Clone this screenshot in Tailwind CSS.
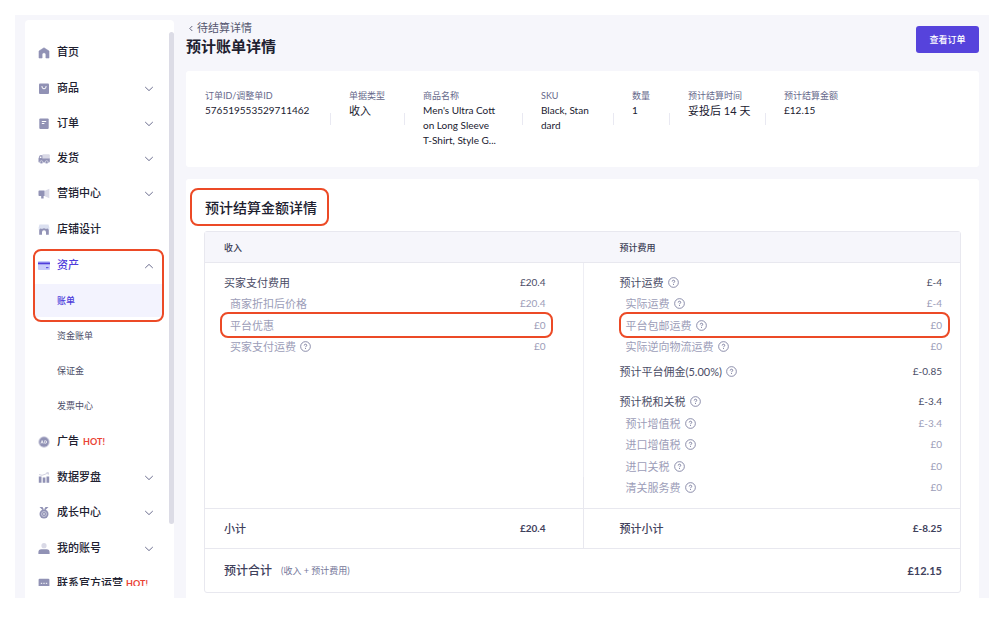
<!DOCTYPE html>
<html lang="zh-CN">
<head>
<meta charset="utf-8">
<meta name="viewport" content="width=device-width, initial-scale=1">
<title>预计账单详情</title>
<script src="https://cdn.jsdelivr.net/npm/@tailwindcss/browser@4"></script>
</head>
<body class="bg-white font-['Lato','Noto_Sans_CJK_SC',sans-serif] text-[#20202f]">
<svg class="hidden">
  <symbol id="down" viewBox="0 0 10 6"><path d="M1.200 1 5 4.600 8.800 1" fill="none" stroke="currentColor" stroke-width="1"/></symbol>
  <symbol id="help" viewBox="0 0 12 12"><circle cx="6" cy="6" r="5.3" fill="none" stroke="currentColor" stroke-width=".9"/><path d="M4.6 4.9c0-.9.6-1.4 1.4-1.4s1.4.5 1.4 1.2c0 1-1.4 1-1.4 2.1M6 7.7v1" fill="none" stroke="currentColor" stroke-width="1"/></symbol>
</svg>
<div class="h-screen pt-[15px] pr-4 pb-[27px] pl-[15px]">
<div class="flex h-full gap-3 overflow-hidden bg-[#f6f6fb] pr-[10px] pl-[10px]">

  <aside class="relative mt-[5px] w-[149px] shrink-0 rounded-t-sm bg-white pb-3">
    <div class="absolute top-3 right-0 h-[492px] w-[5px] rounded-full bg-[#dcdce6]"></div>
    <nav class="h-full overflow-hidden pt-[15px] pr-5 pl-[13px] text-[11px] font-medium">
      <a href="#" class="flex h-[35px] items-center gap-[7px]">
        <svg class="size-3" viewBox="0 0 12 12"><path d="M6 .8 11 4v7H7.9V7.600a1.900 1.900 0 0 0-3.800 0V11H1V4z" fill="#9192b5" stroke="#9192b5" stroke-width=".6" stroke-linejoin="round"/></svg>首页</a>
      <button class="mt-px flex h-[35px] w-full items-center gap-[7px]">
        <svg class="size-3" viewBox="0 0 12 12"><rect x="1" y=".5" width="10" height="10.400" rx="1" fill="#9192b5"/><path d="M4 3v.8a2 2 0 0 0 4 0V3" fill="none" stroke="#fff"/></svg>商品
        <svg class="ml-auto h-[6px] w-[10px] text-[#6d6f90]"><use href="#down"/></svg></button>
      <button class="flex h-[35px] w-full items-center gap-[7px]">
        <svg class="size-3" viewBox="0 0 12 12"><rect x="1.300" y=".5" width="9.400" height="10.400" rx="1" fill="#9192b5"/><path d="M3.800 3.500h4.400M3.800 5.500h2.600" stroke="#fff"/></svg>订单
        <svg class="ml-auto h-[6px] w-[10px] text-[#6d6f90]"><use href="#down"/></svg></button>
      <button class="flex h-[35px] w-full items-center gap-[7px]">
        <svg class="size-3" viewBox="0 0 12 12"><path d="M4.500 1.300h6.300a1 1 0 0 1 1 1V6H4.500z" fill="#d9d9e6"/><path d="M.5 5.500 1.400 3Q1.600 2.300 2.300 2.300h2.200v3.200h7.300v3a1 1 0 0 1-1 1H1.300a.8.800 0 0 1-.8-.8z" fill="#9192b5"/><path d="M1.700 5 2.200 3.600h1.200V5z" fill="#fff"/><circle cx="3.400" cy="9.200" r="1.500" fill="#9192b5" stroke="#fff" stroke-width=".5"/><circle cx="8.700" cy="9.200" r="1.500" fill="#9192b5" stroke="#fff" stroke-width=".5"/></svg>发货
        <svg class="ml-auto h-[6px] w-[10px] text-[#6d6f90]"><use href="#down"/></svg></button>
      <button class="flex h-[35px] w-full items-center gap-[7px]">
        <svg class="size-3" viewBox="0 0 12 12"><path d="M6.300 3 11.300.8v9.400L6.300 8z" fill="#dadae7"/><path d="M1.300 2.500h5.200v5.600H5.600v2.300H3.200V8.100H1.300a.8.8 0 0 1-.8-.8v-4a.8.8 0 0 1 .8-.8z" fill="#9192b5"/></svg>营销中心
        <svg class="ml-auto h-[6px] w-[10px] text-[#6d6f90]"><use href="#down"/></svg></button>
      <a href="#" class="mt-px flex h-[35px] items-center gap-[7px]">
        <svg class="size-3" viewBox="0 0 12 12"><path d="M1.500.5h9l.8 3v2.500H.7V3.500z" fill="#dbe0f0"/><path d="M1.200 6Q2.500 3.600 4 5.100 6 3.600 8 5.100q1.500-1.500 2.800.9v4.800H8V8.300a2 2 0 0 0-4 0v2.500H1.200z" fill="#9192b5"/></svg>店铺设计</a>

      <!-- 资产：展开的菜单组 -->
      <div class="relative mt-px pb-px">
        <button class="flex h-[35px] w-full items-center gap-[7px] text-[#4f3ddb]">
          <svg class="size-3" viewBox="0 0 12 12"><rect width="12" height="9" y="1" rx="1" fill="#c9cdfb"/><path d="M0 3.400h12" stroke="#4f3ddb" stroke-width="1.800"/><path d="M8 7.700h2.500" stroke="#4f3ddb"/></svg>资产
          <svg class="ml-auto h-[6px] w-[10px] rotate-180 text-[#6d6f90]"><use href="#down"/></svg></button>
        <a href="#" class="mt-px -mr-2 -ml-[3px] flex h-[33px] items-center bg-[#f3f3fe] pl-[22px] text-[9px] text-[#4f3ddb]">账单</a>
        <span class="pointer-events-none absolute top-px -right-[10px] -left-[5px] h-[73px] rounded-lg border-2 border-[#ec4a26]"></span>
      </div>
      <a href="#" class="flex h-[35px] items-center pl-[19px] text-[9px] font-normal text-[#4c4e68]">资金账单</a>
      <a href="#" class="flex h-[35px] items-center pl-[19px] text-[9px] font-normal text-[#4c4e68]">保证金</a>
      <a href="#" class="flex h-[35px] items-center pl-[19px] text-[9px] font-normal text-[#4c4e68]">发票中心</a>

      <a href="#" class="mt-px flex h-[35px] items-center gap-[7px]">
        <svg class="size-3" viewBox="0 0 12 12"><circle cx="6" cy="6" r="5.700" fill="#c9c9db"/><circle cx="6" cy="6" r="4.700" fill="#9192b5"/><path d="M2.900 7.500 4.100 4.500 5.300 7.500M3.300 6.700h1.600M6.700 4.700v2.600h.6q1.400 0 1.400-1.300T7.300 4.700z" fill="none" stroke="#fff" stroke-width=".7"/></svg>广告
        <span class="-ml-[3px] text-[9px] font-bold text-[#ea4335]">HOT!</span></a>
      <button class="mt-px flex h-[35px] w-full items-center gap-[7px]">
        <svg class="size-3" viewBox="0 0 12 12"><path d="M.8 4.500h2.700v6.300H.8zM4.700 5.500h2.700v5.300H4.700zM8.500 4.500h2.700v6.300H8.500z" fill="#9192b5"/><path d="M1 2.500 4 3.300 7 2.300 10.300.9M8.500.6l2 .2-.3 2" fill="none" stroke="#ccccdc" stroke-width=".9"/></svg>数据罗盘
        <svg class="ml-auto h-[6px] w-[10px] text-[#6d6f90]"><use href="#down"/></svg></button>
      <button class="flex h-[35px] w-full items-center gap-[7px]">
        <svg class="size-3" viewBox="0 0 12 12"><path d="M1.500 0h3L5.800 2.200 4.800 3.200zM10.500 0h-3L6.200 2.200l1 1z" fill="#9192b5"/><circle cx="6" cy="7" r="4.500" fill="#9192b5"/><circle cx="6" cy="7" r="2.500" fill="none" stroke="#d9d9e6" stroke-width=".7"/><circle cx="6" cy="7" r=".8" fill="#fff"/></svg>成长中心
        <svg class="ml-auto h-[6px] w-[10px] text-[#6d6f90]"><use href="#down"/></svg></button>
      <button class="mt-px flex h-[35px] w-full items-center gap-[7px]">
        <svg class="size-3" viewBox="0 0 12 12"><circle cx="6" cy="2.700" r="2.600" fill="#d9d9e6"/><path d="M.4 11V9.300a3 3 0 0 1 3-3h5.200a3 3 0 0 1 3 3V11z" fill="#9192b5"/></svg>我的账号
        <svg class="ml-auto h-[6px] w-[10px] text-[#6d6f90]"><use href="#down"/></svg></button>
      <a href="#" class="flex h-[35px] items-center gap-[7px] whitespace-nowrap">
        <svg class="size-3 shrink-0" viewBox="0 0 12 12"><rect x=".6" y=".8" width="10.800" height="9" rx="1" fill="#9192b5"/><path d="M2.800 5.300h1.400M5.300 5.300h1.400M7.800 5.300h1.400" stroke="#fff"/></svg>联系官方运营
        <span class="-ml-[4px] text-[9px] font-bold text-[#ea4335]">HOT!</span></a>
    </nav>
  </aside>

  <main class="flex min-w-0 flex-1 flex-col">
    <header class="flex h-14 shrink-0 items-start justify-between">
      <div class="pt-[5px]">
        <a href="#" class="flex h-4 items-center gap-1 pl-[3px] text-[11px] text-[#55576f]">
          <svg class="h-[7px] w-1" viewBox="0 0 4 7"><path d="M3.300 1 .8 3.500 3.300 6" fill="none" stroke="currentColor" stroke-width=".9"/></svg>待结算详情</a>
        <h1 class="text-[15px] leading-5 font-bold">预计账单详情</h1>
      </div>
      <button class="mt-[11px] h-[27px] w-[63px] rounded-[3px] bg-[#5643dc] text-[9px] font-medium text-white">查看订单</button>
    </header>

    <section class="flex min-h-24 shrink-0 gap-[18px] rounded-[3px] bg-white px-[19px] py-[17px] text-[11px] leading-[15px]">
      <dl class="w-[107px]"><dt class="text-[9px] whitespace-nowrap text-[#66688a]">订单ID/调整单ID</dt><dd class="text-[10px]">576519553529711462</dd></dl>
      <div class="h-3 w-px self-center bg-[#e9e9f2]"></div>
      <dl class="w-[37px]"><dt class="text-[9px] text-[#66688a]">单据类型</dt><dd>收入</dd></dl>
      <div class="h-3 w-px self-center bg-[#e9e9f2]"></div>
      <dl class="w-[81px]"><dt class="text-[9px] text-[#66688a]">商品名称</dt><dd class="text-[10px] whitespace-nowrap">Men's Ultra Cott<br>on Long Sleeve<br>T-Shirt, Style G...</dd></dl>
      <div class="h-3 w-px self-center bg-[#e9e9f2]"></div>
      <dl class="w-[54px]"><dt class="text-[9px] text-[#66688a]">SKU</dt><dd class="text-[10px] whitespace-nowrap">Black, Stan<br>dard</dd></dl>
      <div class="h-3 w-px self-center bg-[#e9e9f2]"></div>
      <dl class="w-[19px]"><dt class="text-[9px] text-[#66688a]">数量</dt><dd class="text-[10px]">1</dd></dl>
      <div class="h-3 w-px self-center bg-[#e9e9f2]"></div>
      <dl class="w-[59px]"><dt class="text-[9px] text-[#66688a]">预计结算时间</dt><dd class="whitespace-nowrap">妥投后 14 天</dd></dl>
      <div class="h-3 w-px self-center bg-[#e9e9f2]"></div>
      <dl><dt class="text-[9px] text-[#66688a]">预计结算金额</dt><dd class="text-[10px]">£12.15</dd></dl>
    </section>

    <section class="mt-3 flex-1 rounded-t-[3px] bg-white px-[18px] pt-[9px]">
      <div class="relative flex h-[38px] items-center">
        <h2 class="pl-px text-[14px] font-medium">预计结算金额详情</h2>
        <span class="pointer-events-none absolute inset-y-0 -left-[14px] w-[139px] rounded-lg border-2 border-[#ec4a26]"></span>
      </div>

      <table class="mt-[5px] w-full table-fixed border-separate border-spacing-0 rounded-[3px] border border-[#e8e8ef] text-[11px] leading-[15px] text-[#9c9db8]">
        <thead>
          <tr class="h-[31px] bg-[#f6f6fb] text-left text-[9px] text-[#3c3e56]">
            <th colspan="2" scope="colgroup" class="border-b border-[#e8e8ef] pl-[19px] font-medium">收入</th>
            <th colspan="2" scope="colgroup" class="border-b border-[#e8e8ef] pl-[37px] font-medium">预计费用</th>
          </tr>
        </thead>
        <tbody>
          <tr class="h-[30px] text-[#4a4c66]">
            <td class="pt-[9px] pl-[19px]">买家支付费用</td><td class="pt-[9px] pr-[37px] text-right text-[10px]">£20.4</td>
            <td class="border-l border-[#eeeef4] pt-[9px] pl-9"><span class="flex items-center gap-1">预计运费<button aria-label="说明" class="size-[11px] text-[#75779a]"><svg class="size-full"><use href="#help"/></svg></button></span></td><td class="pt-[9px] pr-[18px] text-right text-[10px]">£-4</td>
          </tr>
          <tr class="h-[21px]">
            <td class="pl-[25px]">商家折扣后价格</td><td class="pr-[37px] text-right text-[10px]">£20.4</td>
            <td class="border-l border-[#eeeef4] pl-[42px]"><span class="flex items-center gap-1">实际运费<button aria-label="说明" class="size-[11px] text-[#75779a]"><svg class="size-full"><use href="#help"/></svg></button></span></td><td class="pr-[18px] text-right text-[10px]">£-4</td>
          </tr>
          <tr class="h-[22px]">
            <td class="relative pl-[25px]">平台优惠<span class="pointer-events-none absolute -top-[2px] left-[15px] h-[26px] w-[calc(200%-45px)] rounded-lg border-2 border-[#ec4a26]"></span></td><td class="pr-[37px] text-right text-[10px]">£0</td>
            <td class="relative border-l border-[#eeeef4] pl-[42px]"><span class="flex items-center gap-1">平台包邮运费<button aria-label="说明" class="size-[11px] text-[#75779a]"><svg class="size-full"><use href="#help"/></svg></button></span><span class="pointer-events-none absolute -top-[2px] left-[35px] h-[26px] w-[calc(200%-44px)] rounded-lg border-2 border-[#ec4a26]"></span></td><td class="pr-[18px] text-right text-[10px]">£0</td>
          </tr>
          <tr class="h-[21px]">
            <td class="pl-[25px]"><span class="flex items-center gap-1">买家支付运费<button aria-label="说明" class="size-[11px] text-[#75779a]"><svg class="size-full"><use href="#help"/></svg></button></span></td><td class="pr-[37px] text-right text-[10px]">£0</td>
            <td class="border-l border-[#eeeef4] pl-[42px]"><span class="flex items-center gap-1">实际逆向物流运费<button aria-label="说明" class="size-[11px] text-[#75779a]"><svg class="size-full"><use href="#help"/></svg></button></span></td><td class="pr-[18px] text-right text-[10px]">£0</td>
          </tr>
          <tr class="h-[25px] text-[#4a4c66]">
            <td></td><td></td>
            <td class="border-l border-[#eeeef4] pt-1 pl-9"><span class="flex items-center gap-1">预计平台佣金(5.00%)<button aria-label="说明" class="size-[11px] text-[#75779a]"><svg class="size-full"><use href="#help"/></svg></button></span></td><td class="pt-1 pr-[18px] text-right text-[10px]">£-0.85</td>
          </tr>
          <tr class="h-[30px] text-[#4a4c66]">
            <td></td><td></td>
            <td class="border-l border-[#eeeef4] pt-[9px] pl-9"><span class="flex items-center gap-1">预计税和关税<button aria-label="说明" class="size-[11px] text-[#75779a]"><svg class="size-full"><use href="#help"/></svg></button></span></td><td class="pt-[9px] pr-[18px] text-right text-[10px]">£-3.4</td>
          </tr>
          <tr class="h-[22px]">
            <td></td><td></td>
            <td class="border-l border-[#eeeef4] pl-[42px]"><span class="flex items-center gap-1">预计增值税<button aria-label="说明" class="size-[11px] text-[#75779a]"><svg class="size-full"><use href="#help"/></svg></button></span></td><td class="pr-[18px] text-right text-[10px]">£-3.4</td>
          </tr>
          <tr class="h-[21px]">
            <td></td><td></td>
            <td class="border-l border-[#eeeef4] pl-[42px]"><span class="flex items-center gap-1">进口增值税<button aria-label="说明" class="size-[11px] text-[#75779a]"><svg class="size-full"><use href="#help"/></svg></button></span></td><td class="pr-[18px] text-right text-[10px]">£0</td>
          </tr>
          <tr class="h-[22px]">
            <td></td><td></td>
            <td class="border-l border-[#eeeef4] pl-[42px]"><span class="flex items-center gap-1">进口关税<button aria-label="说明" class="size-[11px] text-[#75779a]"><svg class="size-full"><use href="#help"/></svg></button></span></td><td class="pr-[18px] text-right text-[10px]">£0</td>
          </tr>
          <tr class="h-8">
            <td class="border-b border-[#e8e8ef]"></td><td class="border-b border-[#e8e8ef]"></td>
            <td class="border-b border-l border-[#e8e8ef] pb-[10px] pl-[42px]"><span class="flex items-center gap-1">清关服务费<button aria-label="说明" class="size-[11px] text-[#75779a]"><svg class="size-full"><use href="#help"/></svg></button></span></td><td class="border-b border-[#e8e8ef] pr-[18px] pb-[10px] text-right text-[10px]">£0</td>
          </tr>
        </tbody>
        <tfoot class="text-[#3f415c]">
          <tr class="h-10 font-medium">
            <td class="border-b border-[#e8e8ef] pl-[19px]">小计</td><td class="border-b border-[#e8e8ef] pr-[37px] text-right text-[10px] font-bold">£20.4</td>
            <td class="border-b border-l border-[#e8e8ef] pl-9">预计小计</td><td class="border-b border-[#e8e8ef] pr-[18px] text-right text-[10px] font-bold">£-8.25</td>
          </tr>
          <tr class="h-[43px]">
            <td colspan="3" class="pl-[19px]"><span class="flex items-center gap-[9px] text-[12px] font-medium">预计合计<small class="text-[9px] font-normal text-[#75779a]">(收入 + 预计费用)</small></span></td>
            <td class="pr-[18px] text-right text-[11px] font-bold">£12.15</td>
          </tr>
        </tfoot>
      </table>
    </section>
  </main>
</div>
</div>
</body>
</html>
